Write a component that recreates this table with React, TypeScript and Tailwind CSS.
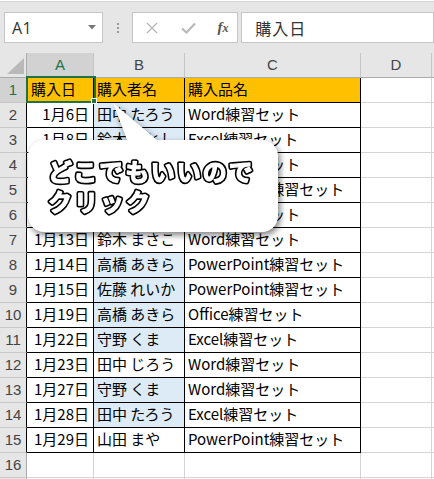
import React from 'react';

type Row = { date: string; name: string; item: string; dup: boolean };

const data: Row[] = [
  { date: '1月6日', name: '田中 たろう', item: 'Word練習セット', dup: true },
  { date: '1月8日', name: '鈴木 さとし', item: 'Excel練習セット', dup: true },
  { date: '1月9日', name: '佐藤 れいか', item: 'Word練習セット', dup: true },
  { date: '1月10日', name: '高橋 あきら', item: 'PowerPoint練習セット', dup: true },
  { date: '1月12日', name: '鈴木 さとし', item: 'Word練習セット', dup: true },
  { date: '1月13日', name: '鈴木 まさこ', item: 'Word練習セット', dup: false },
  { date: '1月14日', name: '高橋 あきら', item: 'PowerPoint練習セット', dup: true },
  { date: '1月15日', name: '佐藤 れいか', item: 'PowerPoint練習セット', dup: true },
  { date: '1月19日', name: '高橋 あきら', item: 'Office練習セット', dup: true },
  { date: '1月22日', name: '守野 くま', item: 'Excel練習セット', dup: true },
  { date: '1月23日', name: '田中 じろう', item: 'Word練習セット', dup: false },
  { date: '1月27日', name: '守野 くま', item: 'Word練習セット', dup: true },
  { date: '1月28日', name: '田中 たろう', item: 'Excel練習セット', dup: true },
  { date: '1月29日', name: '山田 まや', item: 'PowerPoint練習セット', dup: false },
];

const cols = ['A', 'B', 'C', 'D', ''];

function Toolbar() {
  return (
    <div className="h-[52px] bg-[#e6e6e6] border-t border-[#d6d6d6] mt-[1px] flex items-start pt-[10px] pl-[4px]">
      {/* name box */}
      <div className="w-[102px] h-[31px] bg-white border border-[#c6c6c6] flex items-center pl-[7px] pr-[6px] justify-between">
        <span className="text-[16px] text-[#333] [font-family:'Open_Sans',sans-serif] tracking-[0.5px]">A1</span>
        <svg width="8" height="5" viewBox="0 0 8 5"><polygon points="0,0 8,0 4,4.5" fill="#777" /></svg>
      </div>
      <div className="w-[31px] h-[31px] flex flex-col items-center justify-center gap-[2px]">
        <span className="w-[2px] h-[2px] bg-[#9a9a9a]" />
        <span className="w-[2px] h-[2px] bg-[#9a9a9a]" />
        <span className="w-[2px] h-[2px] bg-[#9a9a9a]" />
      </div>
      {/* cancel / enter / fx */}
      <div className="w-[110px] h-[31px] bg-white border border-[#c6c6c6] flex items-center">
        <svg className="ml-[13px]" width="12" height="12" viewBox="0 0 12 12">
          <path d="M1 1 L11 11 M11 1 L1 11" stroke="#b8b8b8" strokeWidth="1.4" />
        </svg>
        <svg className="ml-[23px]" width="15" height="12" viewBox="0 0 15 12">
          <path d="M1 6.5 L5.5 10.5 L14 1.5" stroke="#b8b8b8" strokeWidth="2.2" fill="none" />
        </svg>
        <span className="ml-[21px] text-[15px] italic text-[#555] [font-family:'Liberation_Serif',serif] font-bold leading-none">
          f<span className="text-[12px]">x</span>
        </span>
      </div>
      <div className="ml-[3px] w-[200px] h-[31px] bg-white border border-[#c6c6c6] flex items-center pl-[13px]">
        <span className="text-[16px] text-[#333] [font-family:'Noto_Sans_CJK_JP',sans-serif] tracking-[1px]">購入日</span>
      </div>
    </div>
  );
}

function Sheet() {
  const cellFont = "[font-family:'Noto_Sans_CJK_JP',sans-serif] text-[15px] text-black";
  return (
    <div className="grid grid-cols-[27px_67px_91px_176px_71px_20px] auto-rows-[25px]">
      {/* header row */}
      <div className="bg-[#e6e6e6] border-r border-b border-[#ababab] relative">
        <svg className="absolute left-[7px] top-[5px]" width="17" height="16" viewBox="0 0 17 16">
          <polygon points="17,0 17,16 0,16" fill="#b9b9b9" />
        </svg>
      </div>
      {cols.map((c, i) => (
        <div
          key={c + i}
          className={`flex items-center justify-center border-r border-b border-r-[#c6c6c6] border-b-[#ababab] text-[15px] [font-family:'Liberation_Sans',sans-serif] ${
            i === 0 ? 'bg-[#d2d2d2] text-[#217346]' : 'bg-[#e6e6e6] text-[#444]'
          }`}
        >
          {c}
        </div>
      ))}

      {Array.from({ length: 17 }).map((_, idx) => {
        const r = idx + 1;
        const inTable = r <= 15;
        const rowData = r >= 2 && r <= 15 ? data[r - 2] : null;
        const bd = inTable ? 'border-black' : 'border-[#d4d4d4]';
        return (
          <React.Fragment key={r}>
            <div
              className={`flex items-center justify-center border-b border-b-[#c9c9c9] border-r text-[15px] [font-family:'Liberation_Sans',sans-serif] ${
                inTable ? 'border-r-black' : 'border-r-[#ababab]'
              } ${r === 1 ? 'bg-[#d2d2d2] text-[#217346]' : 'bg-[#e6e6e6] text-[#444]'}`}
            >
              {r <= 16 ? r : ''}
            </div>
            {r === 1 ? (
              <>
                <div className={`bg-[#ffc000] border-r border-b ${bd} flex items-center pl-[4px] pb-[1px] ${cellFont}`}>購入日</div>
                <div className={`bg-[#ffc000] border-r border-b ${bd} flex items-center pl-[3px] pb-[1px] ${cellFont}`}>購入者名</div>
                <div className={`bg-[#ffc000] border-r border-b ${bd} flex items-center pl-[3px] pb-[1px] ${cellFont}`}>購入品名</div>
              </>
            ) : (
              <>
                <div className={`border-r border-b ${bd} flex items-center justify-end pr-[4px] pb-[1px] ${cellFont}`}>
                  {rowData?.date}
                </div>
                <div
                  className={`border-r border-b ${bd} flex items-center pl-[3px] pb-[1px] whitespace-nowrap ${cellFont} ${
                    rowData?.dup ? 'bg-[#ddebf7]' : 'bg-white'
                  }`}
                >
                  {rowData?.name}
                </div>
                <div className={`border-r border-b ${bd} flex items-center pl-[3px] pb-[1px] whitespace-nowrap ${cellFont}`}>
                  {rowData?.item}
                </div>
              </>
            )}
            <div className="border-r border-b border-[#d4d4d4]" />
            <div className="border-b border-[#d4d4d4]" />
          </React.Fragment>
        );
      })}
    </div>
  );
}

export default function App() {
  return (
    <div className="relative w-[434px] h-[479px] overflow-hidden bg-white">
      <Toolbar />
      <Sheet />

      {/* active cell A1 */}
      <div className="absolute left-[26px] top-[76px] w-[70px] h-[27px] border-2 border-[#217346]" />
      <div className="absolute left-[91px] top-[98px] w-[6px] h-[6px] bg-[#217346] border border-white" />

      {/* callout */}
      <div className="absolute inset-0 [filter:drop-shadow(2px_3px_3px_rgba(0,0,0,0.5))]">
        <svg className="absolute left-[108px] top-[100px]" width="70" height="50" viewBox="0 0 70 50">
          <polygon points="5,3 23,50 61,50" fill="#fff" />
        </svg>
        <div className="absolute left-[28px] top-[140px] w-[250px] h-[92px] rounded-[16px] bg-white pl-[18px]">
          <svg width="232" height="90" viewBox="0 0 232 90" className="[font-family:'Noto_Sans_CJK_JP',sans-serif]">
            <g fontSize="24" fontWeight="700" letterSpacing="2" strokeLinejoin="round" strokeLinecap="round">
              <g fill="#000" stroke="#000" strokeWidth="4.5" aria-hidden="true">
                <text x="2" y="41">どこでもいいので</text>
                <text x="2" y="71">クリック</text>
              </g>
              <g fill="#fff" stroke="#fff" strokeWidth="1.2">
                <text x="2" y="41">どこでもいいので</text>
                <text x="2" y="71">クリック</text>
              </g>
            </g>
          </svg>
        </div>
      </div>
    </div>
  );
}
